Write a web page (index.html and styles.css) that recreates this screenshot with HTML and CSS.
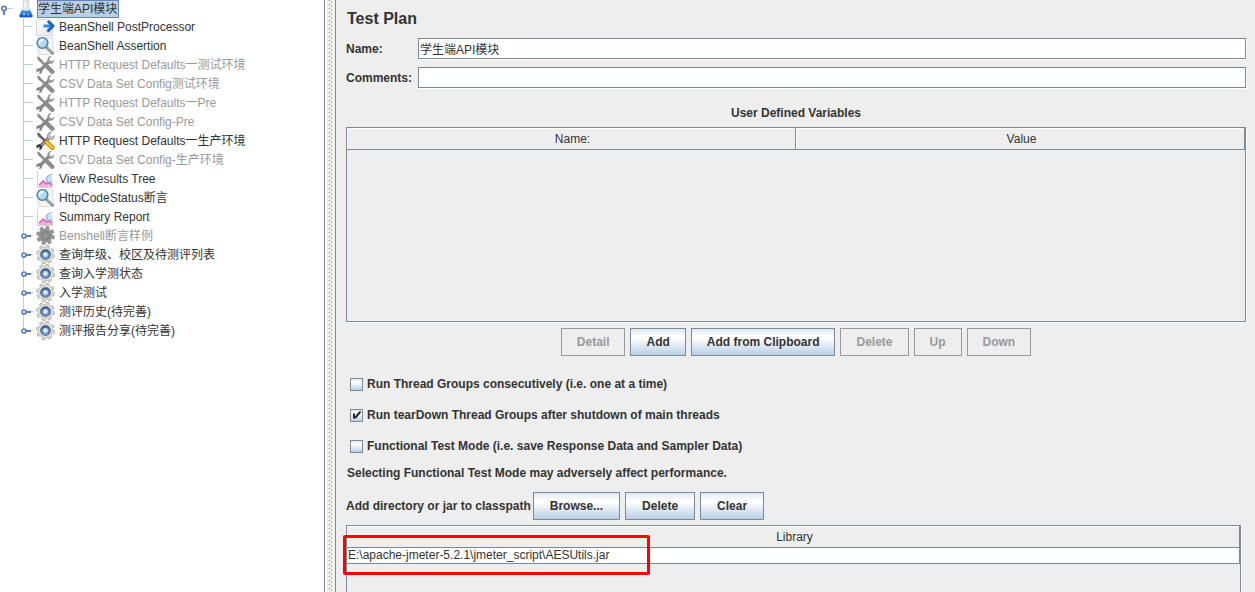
FILE: index.html
```html
<!DOCTYPE html>
<html lang="zh-CN">
<head>
<meta charset="utf-8">
<title>Test Plan</title>
<link rel="stylesheet" href="styles.css">
</head>
<body>
<svg class="defs" width="0" height="0" aria-hidden="true">
  <defs>
    <linearGradient id="lens" x1="0" y1="0" x2="1" y2="1"><stop offset="0" stop-color="#e4f6fd"/><stop offset="1" stop-color="#86c5ea"/></linearGradient>
    <linearGradient id="liquid" x1="0" y1="0" x2="0" y2="1"><stop offset="0" stop-color="#4c9be8"/><stop offset="1" stop-color="#0b55b5"/></linearGradient>
    <linearGradient id="paper" x1="0" y1="0" x2="1" y2="1"><stop offset="0" stop-color="#ffffff"/><stop offset="1" stop-color="#e4e4e8"/></linearGradient>
    <linearGradient id="hub" x1="0" y1="0" x2="0" y2="1"><stop offset="0" stop-color="#2f5796"/><stop offset="1" stop-color="#6f9ad2"/></linearGradient>

    <symbol id="leaf" viewBox="0 0 14 19"><path d="M3.500 0V19M4 9.500H13" fill="none" stroke="#b8cfe5"/></symbol>
    <symbol id="branch" viewBox="0 0 14 19"><path d="M3.500 0V19" stroke="#b8cfe5"/><path d="M5 10H11" stroke="#5b7fbe" stroke-width="2"/><path d="M11 9.500H13" stroke="#b8cfe5"/><circle cx="4" cy="10" r="2" fill="#fff" stroke="#5b7fbe" stroke-width="1.700"/></symbol>
    <symbol id="branch-end" viewBox="0 0 14 19"><path d="M3.500 0V9" stroke="#b8cfe5"/><path d="M5 10H11" stroke="#5b7fbe" stroke-width="2"/><path d="M11 9.500H13" stroke="#b8cfe5"/><circle cx="4" cy="10" r="2" fill="#fff" stroke="#5b7fbe" stroke-width="1.700"/></symbol>
    <symbol id="open-handle" viewBox="0 0 14 17"><path d="M7 8.500H13" stroke="#b8cfe5"/><path d="M4 10V15" stroke="#5b7fbe" stroke-width="2"/><circle cx="4" cy="8.500" r="2.200" fill="#fff" stroke="#5b7fbe" stroke-width="1.700"/></symbol>

    <symbol id="flask" viewBox="0 0 16 18"><path d="M5.500 0H10.500V6L15 16Q15 17.500 13 17.500H3Q1 17.500 1 16L5.500 6Z" fill="#e3e9f2" stroke="#c3cad4" stroke-width=".7"/><path d="M4 10Q8 11.500 12 10L14.600 15.800Q14.500 17.300 13 17.300H3Q1.500 17.300 1.400 15.800Z" fill="url(#liquid)"/><path d="M7 1V6L5.500 9" stroke="#fff" fill="none"/><circle cx="6" cy="14" r="1.200" fill="#8cc6fa"/><circle cx="10" cy="14.500" r="1.100" fill="#65adf3"/></symbol>
    <symbol id="post" viewBox="0 0 19 19"><path d="M.5 2.500H10.500L16.500 8.500V18.500H.5Z" fill="url(#paper)" stroke="#d9d9dd"/><path d="M7.500 7.500H15V10.500H7.500Z" fill="#3a8ae0"/><path d="M12 4L17 9L11.500 14.500" fill="none" stroke="#1263c2" stroke-width="3"/></symbol>
    <symbol id="search" viewBox="0 0 19 19"><path d="M2.500 1.500H17V18.500H2.500Z" fill="#f4f4f5" stroke="#dddde0"/><path d="M10 11L17.500 18" stroke="#83878c" stroke-width="2.800"/><path d="M11 11.500L17 17" stroke="#d5d9dc" stroke-width=".8"/><circle cx="6.500" cy="7" r="5.400" fill="url(#lens)" stroke="#567991" stroke-width="1.400"/><path d="M3.500 6.500Q4 4 7 3.800" fill="none" stroke="#fff"/></symbol>
    <symbol id="tools" viewBox="0 0 19 19"><path d="M1 1.500L3 2L9 8.500L8 10L2.500 5.500Z" fill="#4c4c4c"/><path d="M2 3L8 9L11 12" stroke="#666" stroke-width="2.200"/><path d="M3.500 16L13.500 6" stroke="#555" stroke-width="3.200"/><path d="M4 15.500L13 6.500" stroke="#b5b5b5" stroke-width="1.200"/><path d="M14 1Q10.500 3 11.500 6.500L13 8.500Q18 9.500 18.500 4.500L16 6.500L13.800 5.500L13.500 3.500L15.500 1Z" fill="#c3c7ca" stroke="#888" stroke-width=".7"/><path d="M.5 14L4 13L6.500 15.500L5.500 18.500L2.500 19L4 17L3 16L.5 17.500Z" fill="#3d3d3d"/><path d="M11 11.500L16.300 16.700" stroke="#b48d0d" stroke-width="4.600" stroke-linecap="round"/><path d="M11 11.500L16.300 16.700" stroke="#f4c21b" stroke-width="3" stroke-linecap="round"/></symbol>
    <symbol id="tools-off" viewBox="0 0 19 19"><path d="M1 1.500L3 2L9 8.500L8 10L2.500 5.500Z" fill="#858585"/><path d="M2 3L8 9L11 12" stroke="#8c8c8c" stroke-width="2.400"/><path d="M3.500 16L13.500 6" stroke="#898989" stroke-width="3.200"/><path d="M14 1Q10.500 3 11.500 6.500L13 8.500Q18 9.500 18.500 4.500L16 6.500L13.800 5.500L13.500 3.500L15.500 1Z" fill="#969696"/><path d="M.5 14L4 13L6.500 15.500L5.500 18.500L2.500 19L4 17L3 16L.5 17.500Z" fill="#858585"/><path d="M11 11.500L16.300 16.700" stroke="#8c8c8c" stroke-width="4.400" stroke-linecap="round"/></symbol>
    <symbol id="chart" viewBox="0 0 19 19"><path d="M1.500 2.500V18.500H17" fill="none" stroke="#aaa" stroke-dasharray="1 1"/><path d="M3 18V15L7.500 11L10 14L13 10.500L16.500 14V18Z" fill="#f0b3dc"/><path d="M3 16L7.500 12L10 15L13 14L16 16" fill="none" stroke="#de5fae" stroke-width="1.500"/><circle cx="13" cy="10" r="3.400" fill="#cfe1fb"/><path d="M16.500 5.500Q12 6 10.500 9Q10 12.500 13 13.500L16.500 12.500" fill="none" stroke="#8aadea" stroke-width="1.200"/></symbol>
    <symbol id="gear" viewBox="0 0 19 19"><circle cx="9.500" cy="9.500" r="8" fill="none" stroke="#9d9d99" stroke-width="2.800" stroke-dasharray="3.600 2.683"/><circle cx="9.500" cy="9.500" r="7.300" fill="#e2e2df" stroke="#b0b0ac" stroke-width=".8"/><circle cx="9.500" cy="9.500" r="7.900" fill="none" stroke="#dcdcd9" stroke-width="1.800" stroke-dasharray="2.600 3.604" stroke-dashoffset="-.5"/><circle cx="9.500" cy="9.500" r="5" fill="url(#hub)" stroke="#70757d"/><circle cx="9.500" cy="9.500" r="2.800" fill="#a9c6ec"/><path d="M8.500 7.300L11.500 9.500L8.500 11.700Z" fill="#f3f8ff"/></symbol>
    <symbol id="gear-off" viewBox="0 0 19 19"><circle cx="9.500" cy="9.500" r="8" fill="none" stroke="#929292" stroke-width="2.800" stroke-dasharray="3.600 2.683"/><circle cx="9.500" cy="9.500" r="7.300" fill="#969696"/><circle cx="9.500" cy="9.500" r="4.500" fill="#8c8c8c" stroke="#828282"/><path d="M8 6.500L12 9.500L8 12.500Z" fill="#979797"/></symbol>
  </defs>
</svg>

<div class="app">
  <nav class="sidebar" aria-label="Test plan tree">
    <div class="node root"><svg class="handle"><use href="#open-handle"/></svg><svg class="flask"><use href="#flask"/></svg><span class="selected">学生端API模块</span></div>
    <ul class="children">
      <li class="node"><svg class="twig"><use href="#leaf"/></svg><svg class="icon"><use href="#post"/></svg><span>BeanShell PostProcessor</span></li>
      <li class="node"><svg class="twig"><use href="#leaf"/></svg><svg class="icon"><use href="#search"/></svg><span>BeanShell Assertion</span></li>
      <li class="node off"><svg class="twig"><use href="#leaf"/></svg><svg class="icon"><use href="#tools-off"/></svg><span>HTTP Request Defaults一测试环境</span></li>
      <li class="node off"><svg class="twig"><use href="#leaf"/></svg><svg class="icon"><use href="#tools-off"/></svg><span>CSV Data Set Config测试环境</span></li>
      <li class="node off"><svg class="twig"><use href="#leaf"/></svg><svg class="icon"><use href="#tools-off"/></svg><span>HTTP Request Defaults一Pre</span></li>
      <li class="node off"><svg class="twig"><use href="#leaf"/></svg><svg class="icon"><use href="#tools-off"/></svg><span>CSV Data Set Config-Pre</span></li>
      <li class="node"><svg class="twig"><use href="#leaf"/></svg><svg class="icon"><use href="#tools"/></svg><span>HTTP Request Defaults一生产环境</span></li>
      <li class="node off"><svg class="twig"><use href="#leaf"/></svg><svg class="icon"><use href="#tools-off"/></svg><span>CSV Data Set Config-生产环境</span></li>
      <li class="node"><svg class="twig"><use href="#leaf"/></svg><svg class="icon"><use href="#chart"/></svg><span>View Results Tree</span></li>
      <li class="node"><svg class="twig"><use href="#leaf"/></svg><svg class="icon"><use href="#search"/></svg><span>HttpCodeStatus断言</span></li>
      <li class="node"><svg class="twig"><use href="#leaf"/></svg><svg class="icon"><use href="#chart"/></svg><span>Summary Report</span></li>
      <li class="node off"><svg class="twig"><use href="#branch"/></svg><svg class="icon"><use href="#gear-off"/></svg><span>Benshell断言样例</span></li>
      <li class="node"><svg class="twig"><use href="#branch"/></svg><svg class="icon"><use href="#gear"/></svg><span>查询年级、校区及待测评列表</span></li>
      <li class="node"><svg class="twig"><use href="#branch"/></svg><svg class="icon"><use href="#gear"/></svg><span>查询入学测状态</span></li>
      <li class="node"><svg class="twig"><use href="#branch"/></svg><svg class="icon"><use href="#gear"/></svg><span>入学测试</span></li>
      <li class="node"><svg class="twig"><use href="#branch"/></svg><svg class="icon"><use href="#gear"/></svg><span>测评历史(待完善)</span></li>
      <li class="node"><svg class="twig"><use href="#branch-end"/></svg><svg class="icon"><use href="#gear"/></svg><span>测评报告分享(待完善)</span></li>
    </ul>
  </nav>
  <div class="splitter"><div class="grip"></div></div>
  <main class="panel">
    <h1 class="title">Test Plan</h1>
    <div class="form">
      <label for="name">Name:</label><input class="field" id="name" type="text" value="学生端API模块">
      <label for="comments">Comments:</label><input class="field" id="comments" type="text">
    </div>
    <h2 class="caption">User Defined Variables</h2>
    <div class="grid-box variables">
      <table class="grid">
        <thead><tr><th>Name:</th><th>Value</th></tr></thead>
      </table>
    </div>
    <div class="actions">
      <button class="btn" type="button" disabled>Detail</button>
      <button class="btn" type="button">Add</button>
      <button class="btn" type="button">Add from Clipboard</button>
      <button class="btn" type="button" disabled>Delete</button>
      <button class="btn" type="button" disabled>Up</button>
      <button class="btn" type="button" disabled>Down</button>
    </div>
    <div class="options">
      <label class="option"><input class="tick" type="checkbox">Run Thread Groups consecutively (i.e. one at a time)</label>
      <label class="option"><input class="tick" type="checkbox" checked>Run tearDown Thread Groups after shutdown of main threads</label>
      <label class="option"><input class="tick" type="checkbox">Functional Test Mode (i.e. save Response Data and Sampler Data)</label>
    </div>
    <p class="note">Selecting Functional Test Mode may adversely affect performance.</p>
    <div class="classpath">
      <span>Add directory or jar to classpath</span>
      <button class="btn" type="button">Browse...</button>
      <button class="btn" type="button">Delete</button>
      <button class="btn" type="button">Clear</button>
    </div>
    <div class="library">
      <div class="grid-box library-box">
        <table class="grid">
          <thead><tr><th>Library</th></tr></thead>
          <tbody><tr><td>E:\apache-jmeter-5.2.1\jmeter_script\AESUtils.jar</td></tr></tbody>
        </table>
      </div>
      <div class="highlight"></div>
    </div>
  </main>
</div>
</body>
</html>
```

FILE: styles.css
```css
* { box-sizing: border-box; }

body {
  margin: 0;
  background: #eee;
  color: #333;
  font: 12px/16px "Liberation Sans", Arial, "Noto Sans CJK SC", sans-serif;
}

.defs { display: block; }

.app {
  display: flex;
  height: 100vh;
  overflow: hidden;
}

/* Tree */
.sidebar {
  flex: 0 0 325px;
  background: #fff;
  border-right: 1px solid #7a8a99;
  white-space: nowrap;
  overflow: hidden;
}

.children { margin: 0; padding: 0 0 0 20px; list-style: none; }
.node { display: flex; align-items: center; height: 19px; }
.root { height: 17px; }
.off { color: #999; }
.handle { width: 14px; height: 17px; margin-right: 4px; }
.flask { width: 16px; height: 18px; margin-right: 3px; }
.twig { width: 14px; height: 19px; margin-right: 2px; }
.icon { width: 19px; height: 19px; margin-right: 4px; }
.handle, .flask, .twig, .icon { flex: none; }

.selected {
  height: 18px;
  border: 1px solid #6382bf;
  background: #b8cfe5;
  padding-right: 1px;
}

/* Divider */
.splitter {
  display: flex;
  justify-content: center;
  flex: 0 0 11px;
  border-left: 2px solid #fff;
  border-right: 1px solid #7a8a99;
  background: #eee;
}
.grip {
  width: 4px;
  background:
    conic-gradient(from 270deg at 1px 1px, #7a8a99 90deg, transparent 0) 0 0 / 4px 4px,
    conic-gradient(from 270deg at 1px 1px, #7a8a99 90deg, transparent 0) 2px 2px / 4px 4px,
    conic-gradient(from 270deg at 1px 1px, #fff 90deg, transparent 0) 1px 1px / 4px 4px,
    conic-gradient(from 270deg at 1px 1px, #fff 90deg, transparent 0) 3px 3px / 4px 4px;
}

/* Editor */
.panel {
  flex: 1;
  min-width: 0;
  display: flex;
  flex-direction: column;
  padding: 8px 9px 0 10px;
  font-weight: bold;
}

.title { margin: 0 0 8px 1px; font-size: 16px; line-height: 22px; }

.form {
  display: grid;
  grid-template-columns: 66px 1fr;
  gap: 8px 6px;
  align-items: center;
}

.field {
  width: 100%;
  height: 21px;
  padding: 0 1px;
  border: 1px solid #7a8a99;
  border-radius: 0;
  background: #fff;
  box-shadow: 1px 1px #fff;
  color: #333;
  font: inherit;
  font-weight: normal;
  outline: none;
}

.caption { margin: 17px 0 6px; font-size: 12px; line-height: 16px; text-align: center; }

.grid-box { border: 1px solid #7a8a99; box-shadow: 1px 1px #fff; }
.variables { min-height: 195px; }
.grid { width: 100%; border-collapse: separate; border-spacing: 0; table-layout: fixed; font-weight: normal; }
.grid th {
  height: 22px;
  padding: 0 0 0 3px;
  border-right: 1px solid #7a8a99;
  border-bottom: 1px solid #7a8a99;
  box-shadow: inset 1px 1px #fff;
  font-weight: normal;
}
.grid td {
  height: 16px;
  padding: 0 1px;
  border-right: 1px solid #7a8a99;
  border-bottom: 1px solid #7a8a99;
  background: #fff;
  line-height: 15px;
}

.actions { display: flex; justify-content: center; gap: 5px; margin-top: 6px; }

.btn {
  height: 28px;
  padding: 0 16px;
  border: 1px solid #7a8a99;
  border-radius: 0;
  background: linear-gradient(#dde8f3, #fff 30%, #fff 35%, #b8cfe5);
  color: #333;
  font: inherit;
}
.actions .btn { padding: 0 15px; }
.btn:disabled { border-color: #999; background: #eee; color: #999; }

.options { display: grid; gap: 15px; margin: 20px 0 0 4px; }
.option { display: flex; align-items: center; gap: 4px; }

.tick {
  appearance: none;
  flex: none;
  width: 13px;
  height: 13px;
  margin: 0;
  border: 1px solid #7a8a99;
  background: linear-gradient(#dde8f3, #fff 30%, #b8cfe5);
}
.tick:checked::after {
  content: "";
  display: block;
  width: 9px;
  height: 9px;
  margin: 1px;
  background: #222;
  clip-path: polygon(1px 3px, 3px 3px, 3px 6px, 7px 1px, 9px 1px, 9px 2px, 4px 8px, 1px 8px);
}

.note { margin: 11px 0 11px 1px; }

.classpath { display: flex; align-items: center; gap: 5px; }
.classpath span { margin-right: -3px; }

.library {
  position: relative;
  flex: 1;
  margin: 5px 5px 0 0;
}
.library-box { height: 100%; border-bottom: 0; }
.highlight {
  position: absolute;
  top: 10px;
  left: -3px;
  width: 307px;
  height: 40px;
  border: 3px solid #f00;
  border-radius: 2px;
}
```
